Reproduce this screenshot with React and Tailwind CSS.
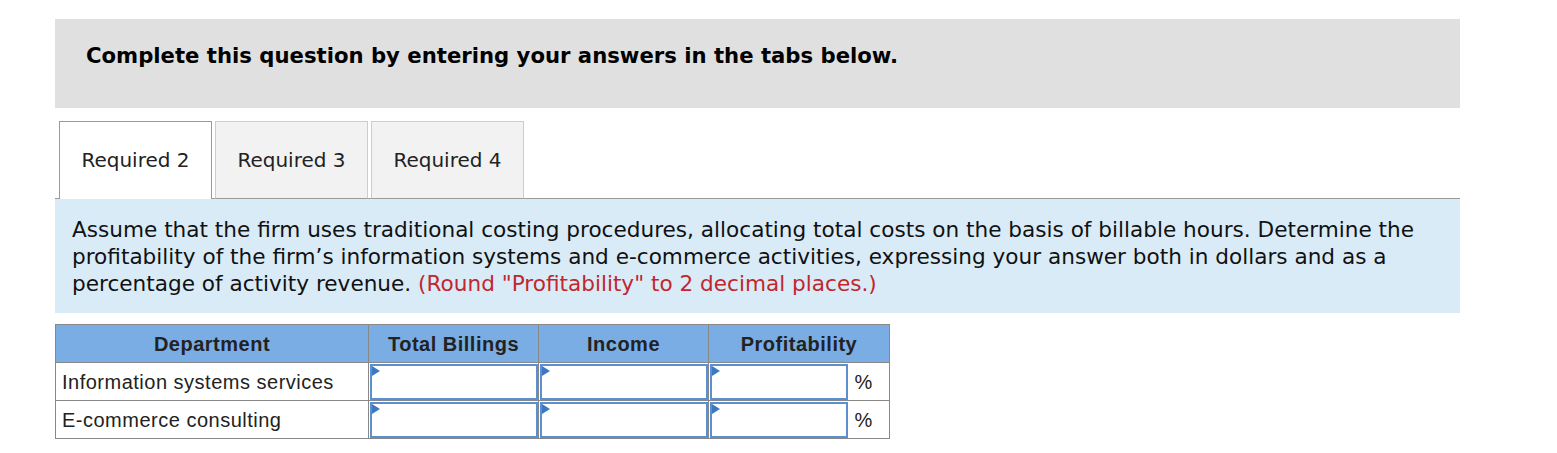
import React from 'react';

const ROWS = ['Information systems services', 'E-commerce consulting'];
const TABS = ['Required 2', 'Required 3', 'Required 4'];

const AnswerInput = () => (
    <div className="relative h-[36px] border-2 border-[#5b8fd0] bg-white">
        <div className="absolute left-0 top-0 w-0 h-0 border-t-[5px] border-b-[5px] border-l-[8px] border-t-transparent border-b-transparent border-l-[#3d79c2]"></div>
    </div>
);

export default function App() {
    return (
        <div className="bg-white min-h-[453px] pt-[19px] pl-[55px]" style={{ fontFamily: '"DejaVu Sans", Verdana, sans-serif' }}>
            <div className="w-[1405px]">
                <div className="h-[89px] bg-[#e0e0e0] pl-[31px] pt-[24px]">
                    <h1 className="text-[21.2px] font-bold text-black leading-[26px]">
                        Complete this question by entering your answers in the tabs below.
                    </h1>
                </div>

                <div className="mt-[13px] flex items-end border-b border-[#999] pl-[4px] gap-[3px]">
                    {TABS.map((t, i) => (
                        <div
                            key={t}
                            className={`h-[78px] w-[153px] flex items-center justify-center text-[20px] text-[#222] -mb-px ${
                                i === 0 ? 'bg-white border border-b-0 border-[#999] pb-[1px]' : 'bg-[#f2f2f2] border border-[#ccc] border-b-[#999] pb-[1px]'
                            }`}
                        >
                            {t}
                        </div>
                    ))}
                </div>

                <div className="bg-[#daebf8] pl-[17px] pt-[17px] pb-[16px] text-[21.6px] leading-[27px] text-[#111]">
                    Assume that the firm uses traditional costing procedures, allocating total costs on the basis of billable hours. Determine the
                    <br />
                    profitability of the firm’s information systems and e-commerce activities, expressing your answer both in dollars and as a
                    <br />
                    percentage of activity revenue.{' '}
                    <span className="text-[#c1272d]">(Round "Profitability" to 2 decimal places.)</span>
                </div>

                <table
                    className="mt-[11px] border-collapse text-[20px] tracking-[0.5px] text-[#222]"
                    style={{ fontFamily: '"Liberation Sans", Arial, sans-serif' }}
                >
                    <thead>
                        <tr className="h-[38px] bg-[#7aade3]">
                            <th className="w-[313px] border border-[#888] font-bold">Department</th>
                            <th className="w-[170px] border border-[#888] font-bold">Total Billings</th>
                            <th className="w-[170px] border border-[#888] font-bold">Income</th>
                            <th colSpan={2} className="w-[181px] border border-[#888] font-bold">Profitability</th>
                        </tr>
                    </thead>
                    <tbody>
                        {ROWS.map(r => (
                            <tr key={r} className="h-[38px]">
                                <td className="border border-[#888] px-[6px] text-left">{r}</td>
                                <td className="border border-[#888] p-0 pl-px"><AnswerInput /></td>
                                <td className="border border-[#888] p-0 pl-px"><AnswerInput /></td>
                                <td className="w-[139px] border border-[#888] border-r-0 p-0 pl-px"><AnswerInput /></td>
                                <td className="w-[42px] border border-[#888] border-l-0 pl-[7px]">%</td>
                            </tr>
                        ))}
                    </tbody>
                </table>
            </div>
        </div>
    );
}
